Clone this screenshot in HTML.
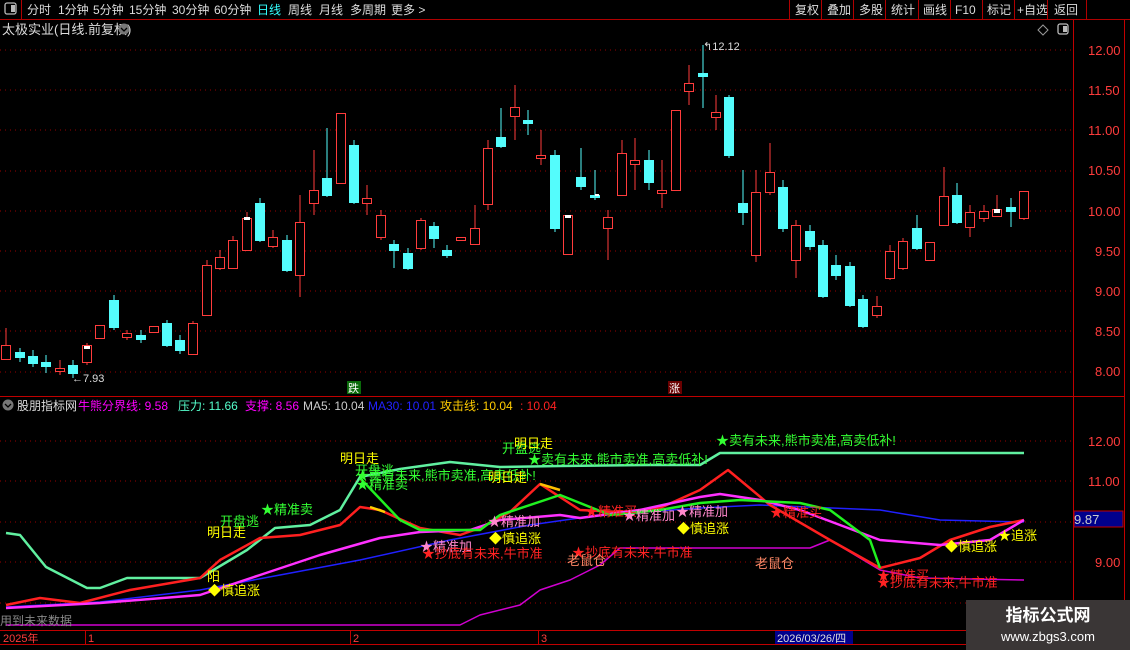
<!DOCTYPE html>
<html><head><meta charset="utf-8"><style>
body{margin:0;background:#000;width:1130px;height:650px;overflow:hidden;font-family:"Liberation Sans","Noto Sans CJK SC",sans-serif;}
svg{position:absolute;left:0;top:0}
</style></head><body>
<svg width="1130" height="650" viewBox="0 0 1130 650" font-family="Liberation Sans, Noto Sans CJK SC, sans-serif">
<rect width="1130" height="650" fill="#000"/>
<!-- top bar -->
<line x1="0" y1="19.5" x2="1130" y2="19.5" stroke="#b00000"/>
<line x1="21.5" y1="0" x2="21.5" y2="19" stroke="#b00000"/>
<rect x="5" y="3" width="11" height="11" rx="2" fill="none" stroke="#bbb" stroke-width="1.3"/><rect x="11" y="5" width="4" height="7" fill="#bbb"/>
<g font-size="12" fill="#ddd">
<text x="27" y="14">分时</text><text x="58" y="14">1分钟</text><text x="93" y="14">5分钟</text><text x="129" y="14">15分钟</text><text x="172" y="14">30分钟</text><text x="214" y="14">60分钟</text><text x="257" y="14" fill="#3ff">日线</text><text x="288" y="14">周线</text><text x="319" y="14">月线</text><text x="350" y="14">多周期</text><text x="391" y="14">更多 &gt;</text>
<text x="795" y="14">复权</text><text x="827" y="14">叠加</text><text x="859" y="14">多股</text><text x="891" y="14">统计</text><text x="923" y="14">画线</text><text x="955" y="14">F10</text><text x="987" y="14">标记</text><text x="1017" y="14">+自选</text><text x="1054" y="14">返回</text>
</g>
<g stroke="#b00000"><line x1="789.5" y1="0" x2="789.5" y2="19"/><line x1="821.5" y1="0" x2="821.5" y2="19"/><line x1="853.5" y1="0" x2="853.5" y2="19"/><line x1="885.5" y1="0" x2="885.5" y2="19"/><line x1="918.5" y1="0" x2="918.5" y2="19"/><line x1="950.5" y1="0" x2="950.5" y2="19"/><line x1="982.5" y1="0" x2="982.5" y2="19"/><line x1="1014.5" y1="0" x2="1014.5" y2="19"/><line x1="1047.5" y1="0" x2="1047.5" y2="19"/><line x1="1086.5" y1="0" x2="1086.5" y2="19"/></g>
<text x="2" y="34" font-size="13" fill="#ddd">太极实业(日线.前复权)</text>
<circle cx="124" cy="29" r="5.5" fill="#777"/><path d="M121 28l3 3 3-3" stroke="#000" fill="none" stroke-width="1.3"/>
<path d="M1043 25l5 5-5 5-5-5z" fill="none" stroke="#999"/>
<rect x="1058" y="24" width="10" height="10" rx="2" fill="none" stroke="#bbb" stroke-width="1.3"/><rect x="1063" y="26" width="4" height="6" fill="#bbb"/>
<!-- axes -->
<line x1="1073.5" y1="20" x2="1073.5" y2="650" stroke="#c00000"/>
<line x1="1124.5" y1="20" x2="1124.5" y2="650" stroke="#c00000"/>
<line x1="0" y1="396.5" x2="1124" y2="396.5" stroke="#c00000"/>
<line x1="0" y1="630.5" x2="1073" y2="630.5" stroke="#c00000"/>
<line x1="0" y1="644.5" x2="1073" y2="644.5" stroke="#c00000"/>
<g stroke="#900" stroke-dasharray="1 4">
<line x1="0" y1="50" x2="1073" y2="50"/><line x1="0" y1="90" x2="1073" y2="90"/><line x1="0" y1="130" x2="1073" y2="130"/><line x1="0" y1="171" x2="1073" y2="171"/><line x1="0" y1="211" x2="1073" y2="211"/><line x1="0" y1="251" x2="1073" y2="251"/><line x1="0" y1="291" x2="1073" y2="291"/><line x1="0" y1="331" x2="1073" y2="331"/><line x1="0" y1="372" x2="1073" y2="372"/>
<line x1="0" y1="441" x2="1073" y2="441"/><line x1="0" y1="481" x2="1073" y2="481"/><line x1="0" y1="522" x2="1073" y2="522"/><line x1="0" y1="562" x2="1073" y2="562"/><line x1="0" y1="603" x2="1073" y2="603"/>
</g>
<g font-size="13" fill="#ff3c3c">
<text x="1088" y="55">12.00</text><text x="1088" y="95">11.50</text><text x="1088" y="135">11.00</text><text x="1088" y="175">10.50</text><text x="1088" y="216">10.00</text><text x="1095" y="256">9.50</text><text x="1095" y="296">9.00</text><text x="1095" y="336">8.50</text><text x="1095" y="376">8.00</text>
<text x="1088" y="446">12.00</text><text x="1088" y="486">11.00</text><text x="1095" y="567">9.00</text>
</g>
<rect x="1074" y="511" width="49" height="16" fill="#00008c" stroke="#c00000"/>
<text x="1074" y="524" font-size="13" fill="#ccc">9.87</text>
<!-- candles -->
<g stroke-width="1">
<g stroke="#ff3c3c" fill="#000">
<line x1="6" y1="328" x2="6" y2="360"/><rect x="1.5" y="345.5" width="9" height="14"/>
<line x1="60" y1="360" x2="60" y2="375"/><rect x="55.5" y="368.5" width="9" height="3"/>
<line x1="87" y1="343" x2="87" y2="365"/><rect x="82.5" y="345.5" width="9" height="17"/>
<rect x="95.5" y="325.5" width="9" height="13"/>
<line x1="127" y1="330" x2="127" y2="340"/><rect x="122.5" y="333.5" width="9" height="4"/>
<rect x="149.5" y="326.5" width="9" height="6"/>
<line x1="193" y1="321" x2="193" y2="355"/><rect x="188.5" y="323.5" width="9" height="31"/>
<line x1="207" y1="260" x2="207" y2="315"/><rect x="202.5" y="265.5" width="9" height="50"/>
<line x1="220" y1="250" x2="220" y2="270"/><rect x="215.5" y="257.5" width="9" height="11"/>
<line x1="233" y1="236" x2="233" y2="268"/><rect x="228.5" y="240.5" width="9" height="28"/>
<line x1="247" y1="212" x2="247" y2="250"/><rect x="242.5" y="218.5" width="9" height="32"/>
<line x1="273" y1="230" x2="273" y2="248"/><rect x="268.5" y="237.5" width="9" height="9"/>
<line x1="300" y1="195" x2="300" y2="297"/><rect x="295.5" y="222.5" width="9" height="53"/>
<line x1="314" y1="150" x2="314" y2="215"/><rect x="309.5" y="190.5" width="9" height="13"/>
<rect x="336.5" y="113.5" width="9" height="70"/>
<line x1="367" y1="185" x2="367" y2="215"/><rect x="362.5" y="198.5" width="9" height="5"/>
<line x1="381" y1="210" x2="381" y2="240"/><rect x="376.5" y="215.5" width="9" height="22"/>
<line x1="421" y1="218" x2="421" y2="250"/><rect x="416.5" y="220.5" width="9" height="28"/>
<rect x="456.5" y="237.5" width="9" height="3"/>
<line x1="475" y1="205" x2="475" y2="245"/><rect x="470.5" y="228.5" width="9" height="16"/>
<line x1="488" y1="140" x2="488" y2="210"/><rect x="483.5" y="148.5" width="9" height="56"/>
<line x1="515" y1="85" x2="515" y2="140"/><rect x="510.5" y="107.5" width="9" height="9"/>
<line x1="541" y1="130" x2="541" y2="165"/><rect x="536.5" y="155.5" width="9" height="3"/>
<rect x="563.5" y="215.5" width="9" height="39"/>
<line x1="608" y1="210" x2="608" y2="260"/><rect x="603.5" y="217.5" width="9" height="11"/>
<line x1="622" y1="140" x2="622" y2="196"/><rect x="617.5" y="153.5" width="9" height="42"/>
<line x1="635" y1="138" x2="635" y2="190"/><rect x="630.5" y="160.5" width="9" height="4"/>
<line x1="662" y1="160" x2="662" y2="208"/><rect x="657.5" y="190.5" width="9" height="3"/>
<rect x="671.5" y="110.5" width="9" height="80"/>
<line x1="689" y1="65" x2="689" y2="105"/><rect x="684.5" y="83.5" width="9" height="8"/>
<line x1="716" y1="95" x2="716" y2="130"/><rect x="711.5" y="112.5" width="9" height="5"/>
<line x1="756" y1="170" x2="756" y2="262"/><rect x="751.5" y="192.5" width="9" height="63"/>
<line x1="770" y1="143" x2="770" y2="195"/><rect x="765.5" y="172.5" width="9" height="20"/>
<line x1="796" y1="220" x2="796" y2="278"/><rect x="791.5" y="225.5" width="9" height="35"/>
<line x1="877" y1="296" x2="877" y2="318"/><rect x="872.5" y="306.5" width="9" height="9"/>
<line x1="890" y1="245" x2="890" y2="280"/><rect x="885.5" y="251.5" width="9" height="27"/>
<line x1="903" y1="238" x2="903" y2="270"/><rect x="898.5" y="241.5" width="9" height="27"/>
<rect x="925.5" y="242.5" width="9" height="18"/>
<line x1="944" y1="167" x2="944" y2="225"/><rect x="939.5" y="196.5" width="9" height="29"/>
<line x1="970" y1="205" x2="970" y2="237"/><rect x="965.5" y="212.5" width="9" height="15"/>
<line x1="984" y1="205" x2="984" y2="222"/><rect x="979.5" y="211.5" width="9" height="7"/>
<line x1="997" y1="195" x2="997" y2="216"/><rect x="992.5" y="209.5" width="9" height="7"/>
<line x1="1024" y1="191" x2="1024" y2="220"/><rect x="1019.5" y="191.5" width="9" height="27"/>
</g>
<g stroke="#54fcfc" fill="#54fcfc">
<line x1="20" y1="348" x2="20" y2="362"/><rect x="15.5" y="352.5" width="9" height="5"/>
<line x1="33" y1="350" x2="33" y2="367"/><rect x="28.5" y="356.5" width="9" height="7"/>
<line x1="46" y1="355" x2="46" y2="373"/><rect x="41.5" y="362.5" width="9" height="4"/>
<line x1="73" y1="360" x2="73" y2="378"/><rect x="68.5" y="365.5" width="9" height="8"/>
<line x1="114" y1="295" x2="114" y2="330"/><rect x="109.5" y="300.5" width="9" height="27"/>
<line x1="141" y1="330" x2="141" y2="343"/><rect x="136.5" y="335.5" width="9" height="4"/>
<line x1="167" y1="320" x2="167" y2="347"/><rect x="162.5" y="323.5" width="9" height="22"/>
<line x1="180" y1="335" x2="180" y2="354"/><rect x="175.5" y="340.5" width="9" height="10"/>
<line x1="260" y1="198" x2="260" y2="242"/><rect x="255.5" y="203.5" width="9" height="37"/>
<line x1="287" y1="235" x2="287" y2="272"/><rect x="282.5" y="240.5" width="9" height="30"/>
<line x1="327" y1="128" x2="327" y2="197"/><rect x="322.5" y="178.5" width="9" height="17"/>
<line x1="354" y1="140" x2="354" y2="204"/><rect x="349.5" y="145.5" width="9" height="57"/>
<line x1="394" y1="240" x2="394" y2="268"/><rect x="389.5" y="244.5" width="9" height="6"/>
<line x1="408" y1="248" x2="408" y2="270"/><rect x="403.5" y="253.5" width="9" height="15"/>
<line x1="434" y1="222" x2="434" y2="248"/><rect x="429.5" y="226.5" width="9" height="12"/>
<line x1="447" y1="245" x2="447" y2="258"/><rect x="442.5" y="250.5" width="9" height="5"/>
<line x1="501" y1="108" x2="501" y2="148"/><rect x="496.5" y="137.5" width="9" height="9"/>
<line x1="528" y1="110" x2="528" y2="135"/><rect x="523.5" y="120.5" width="9" height="3"/>
<line x1="555" y1="150" x2="555" y2="232"/><rect x="550.5" y="155.5" width="9" height="73"/>
<line x1="581" y1="148" x2="581" y2="190"/><rect x="576.5" y="177.5" width="9" height="9"/>
<line x1="595" y1="170" x2="595" y2="200"/><rect x="590.5" y="195.5" width="9" height="2"/>
<line x1="649" y1="150" x2="649" y2="190"/><rect x="644.5" y="160.5" width="9" height="22"/>
<line x1="703" y1="45" x2="703" y2="108"/><rect x="698.5" y="73.5" width="9" height="3"/>
<line x1="729" y1="95" x2="729" y2="158"/><rect x="724.5" y="97.5" width="9" height="58"/>
<line x1="743" y1="170" x2="743" y2="225"/><rect x="738.5" y="203.5" width="9" height="9"/>
<line x1="783" y1="180" x2="783" y2="232"/><rect x="778.5" y="187.5" width="9" height="41"/>
<line x1="810" y1="225" x2="810" y2="250"/><rect x="805.5" y="231.5" width="9" height="15"/>
<line x1="823" y1="240" x2="823" y2="298"/><rect x="818.5" y="245.5" width="9" height="51"/>
<line x1="836" y1="255" x2="836" y2="280"/><rect x="831.5" y="265.5" width="9" height="10"/>
<line x1="850" y1="262" x2="850" y2="307"/><rect x="845.5" y="266.5" width="9" height="39"/>
<line x1="863" y1="295" x2="863" y2="328"/><rect x="858.5" y="299.5" width="9" height="27"/>
<line x1="917" y1="215" x2="917" y2="250"/><rect x="912.5" y="228.5" width="9" height="20"/>
<line x1="957" y1="183" x2="957" y2="224"/><rect x="952.5" y="195.5" width="9" height="27"/>
<line x1="1011" y1="198" x2="1011" y2="227"/><rect x="1006.5" y="207.5" width="9" height="4"/>
</g>
<g fill="#fff"><rect x="84" y="346" width="6" height="3"/><rect x="244" y="217" width="6" height="3"/><rect x="565" y="215" width="6" height="3"/><rect x="595" y="194" width="4" height="2"/><rect x="994" y="209" width="6" height="4"/></g>
</g>
<text x="72" y="382" font-size="11" fill="#ddd">←7.93</text>
<text x="703" y="50" font-size="11" fill="#ddd">↰12.12</text>
<rect x="347" y="381" width="14" height="13" fill="#0a6a0a"/><text x="348" y="392" font-size="11" fill="#fff">跌</text>
<rect x="668" y="381" width="14" height="13" fill="#6a0000"/><text x="669" y="392" font-size="11" fill="#fff">涨</text>
<!-- indicator header -->
<circle cx="8" cy="405" r="5.5" fill="#777"/><path d="M5 404l3 3 3-3" stroke="#000" fill="none" stroke-width="1.3"/>
<g font-size="12"><text x="17" y="410" fill="#ddd">股朋指标网</text><text x="78" y="410" fill="#f0f">牛熊分界线: 9.58</text><text x="178" y="410" fill="#5fc">压力: 11.66</text><text x="245" y="410" fill="#f0f">支撑: 8.56</text><text x="303" y="410" fill="#ccc">MA5: 10.04</text><text x="368" y="410" fill="#22f">MA30: 10.01</text><text x="440" y="410" fill="#fc0">攻击线: 10.04</text><text x="520" y="410" fill="#f22">: 10.04</text></g>
<!-- indicator lines -->
<g fill="none" stroke-width="2.5" stroke-linejoin="round">
<polyline stroke="#d000d0" stroke-width="1.5" points="6,625 460,625 480,615 520,605 540,590 570,580 600,565 620,548 810,548 830,540 880,570 920,578 1024,580"/>
<polyline stroke="#2020ff" stroke-width="1.5" points="6,607 100,602 200,590 280,575 360,560 450,540 530,525 600,515 700,508 760,505 880,510 940,520 1024,522"/>
<polyline stroke="#60f0a0" points="6,533 20,535 46,567 87,588 100,588 127,578 200,578 247,550 275,528 310,525 340,510 360,477 400,469 450,462 500,467 560,466 650,465 700,465 720,453 1024,453"/>
<polyline stroke="#ff2020" points="6,605 40,598 80,603 130,590 200,578 220,560 260,538 300,535 340,525 360,507 380,510 420,528 460,535 480,528 510,512 540,484 580,510 620,512 660,508 700,490 728,470 770,505 830,540 880,568 920,558 950,540 990,527 1024,520"/>
<polyline stroke="#ff30ff" points="6,608 100,603 200,595 260,575 320,555 380,538 420,532 470,530 500,520 560,515 580,518 640,510 700,497 720,494 760,500 800,510 840,525 880,540 940,545 990,540 1024,520"/>
<polyline stroke="#20f020" points="360,478 400,520 420,530 480,530 500,515 560,495 610,515 660,510 700,503 740,500 800,503 830,510 870,540 880,568"/>
<polyline stroke="#ffd000" points="370,507 385,512 M200,578 215,570"/>
<polyline stroke="#ffc000" points="540,484 560,490 M728,470 745,485 M990,522 1010,523 1024,520"/>
</g>
<!-- indicator labels -->
<g font-size="13">
<text x="220" y="526" fill="#3f3">开盘逃</text><text x="207" y="537" fill="#ff0">明日走</text>
<text x="261" y="514" fill="#3f3">★精准卖</text>
<text x="340" y="463" fill="#ff0">明日走</text><text x="355" y="475" fill="#3f3">开盘逃</text>
<text x="356" y="480" fill="#3f3">★卖有未来,熊市卖准,高卖低补!</text>
<text x="356" y="489" fill="#3f3">★精准卖</text><text x="488" y="482" fill="#ff0">明日走</text>
<text x="502" y="453" fill="#3f3">开盘逃</text><text x="514" y="448" fill="#ff0">明日走</text>
<text x="528" y="464" fill="#3f3">★卖有未来,熊市卖准,高卖低补!</text>
<text x="716" y="445" fill="#3f3">★卖有未来,熊市卖准,高卖低补!</text>
<text x="420" y="551" fill="#f8c">★精准加</text><text x="422" y="558" fill="#f22">★抄底有未来,牛市准</text>
<text x="488" y="526" fill="#f8c">★精准加</text><text x="489" y="543" fill="#ff0">◆慎追涨</text>
<text x="572" y="557" fill="#f22">★抄底有未来,牛市准</text><text x="567" y="565" fill="#f86">老鼠仓</text>
<text x="585" y="516" fill="#f22">★精准买</text><text x="623" y="520" fill="#f8c">★精准加</text>
<text x="676" y="516" fill="#f8c">★精准加</text><text x="677" y="533" fill="#ff0">◆慎追涨</text>
<text x="755" y="568" fill="#f86">老鼠仓</text><text x="770" y="517" fill="#f22">★精准买</text>
<text x="877" y="580" fill="#f22">★精准买</text><text x="877" y="587" fill="#f22">★抄底有未来,牛市准</text>
<text x="945" y="551" fill="#ff0">◆慎追涨</text><text x="998" y="540" fill="#ff0">★追涨</text>
<text x="207" y="581" fill="#ff0">阳</text><text x="208" y="595" fill="#ff0">◆慎追涨</text>
</g>
<text x="0" y="625" font-size="12" fill="#888">用到未来数据</text>
<!-- bottom axis -->
<g font-size="11" fill="#ff3c3c"><text x="3" y="642">2025年</text><text x="88" y="642">1</text><text x="353" y="642">2</text><text x="541" y="642">3</text></g>
<g stroke="#c00000"><line x1="85.5" y1="630" x2="85.5" y2="644"/><line x1="350.5" y1="630" x2="350.5" y2="644"/><line x1="538.5" y1="630" x2="538.5" y2="644"/></g>
<rect x="775" y="631" width="78" height="13" fill="#00008c"/><text x="777" y="642" font-size="11" fill="#ddd">2026/03/26/四</text>
<rect x="966" y="600" width="164" height="50" fill="#3a3636"/>
<text x="1048" y="621" font-size="17" font-weight="bold" fill="#fff" text-anchor="middle">指标公式网</text>
<text x="1048" y="641" font-size="13" fill="#fff" text-anchor="middle">www.zbgs3.com</text>
</svg>
</body></html>
